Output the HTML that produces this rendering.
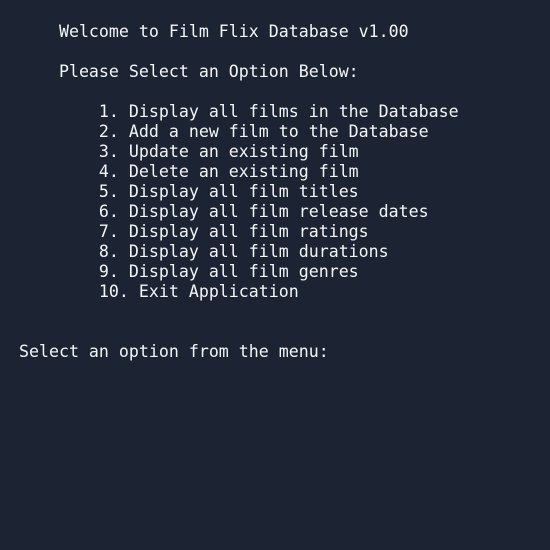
<!DOCTYPE html>
<html><head><meta charset="utf-8"><style>
html,body{margin:0;padding:0;width:550px;height:550px;background:#1c2333;overflow:hidden}
pre{margin:0;position:absolute;left:19px;top:22px;font-family:"DejaVu Sans Mono","Liberation Mono",monospace;font-size:16.6px;line-height:20px;color:#f5f6f8}
</style></head><body><pre>    Welcome to Film Flix Database v1.00

    Please Select an Option Below:

        1. Display all films in the Database
        2. Add a new film to the Database
        3. Update an existing film
        4. Delete an existing film
        5. Display all film titles
        6. Display all film release dates
        7. Display all film ratings
        8. Display all film durations
        9. Display all film genres
        10. Exit Application


Select an option from the menu:</pre></body></html>
